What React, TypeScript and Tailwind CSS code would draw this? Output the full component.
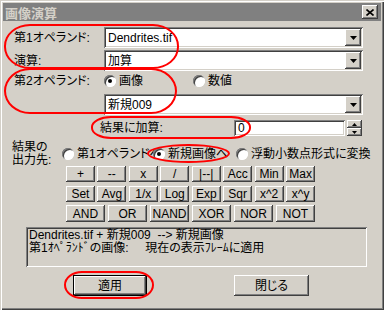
import React from "react";

const raised =
  "bg-[#d4d0c8] shadow-[inset_-1px_-1px_0_#404040,inset_1px_1px_0_#ffffff,inset_-2px_-2px_0_#808080]";
const sunken =
  "bg-white shadow-[inset_1px_1px_0_#808080,inset_-1px_-1px_0_#ffffff,inset_2px_2px_0_#404040,inset_-2px_-2px_0_#d4d0c8]";

const Arrow = () => (
  <svg width="7" height="4" viewBox="0 0 7 4">
    <path d="M0 0h7L3.5 4z" fill="#000" />
  </svg>
);

const Combo = ({ text }: { text: string }) => (
  <div className={`${sunken} w-[259px] h-[21px] flex items-center pl-[4px] pr-[2px]`}>
    <span className="text-[12px]">{text}</span>
    <div className={`${raised} ml-auto w-[16px] h-[17px] flex items-center justify-center`}>
      <Arrow />
    </div>
  </div>
);

const Radio = ({ checked, label, w }: { checked?: boolean; label: string; w?: string }) => (
  <div className={`flex items-center ${w ?? ""}`}>
    <div className="w-[12px] h-[12px] rounded-full bg-white shadow-[inset_1px_1px_0_#808080,inset_-1px_-1px_0_#ffffff,inset_2px_2px_0_#404040] flex items-center justify-center shrink-0">
      {checked && <div className="w-[4px] h-[4px] rounded-full bg-black" />}
    </div>
    <span className="ml-[3px] whitespace-nowrap">{label}</span>
  </div>
);

const Btn = ({ label }: { label: string }) => (
  <div className={`${raised} flex items-center justify-center text-[12px] h-full`}>{label}</div>
);

const row1 = ["+", "--", "x", "/", "|--|", "Acc", "Min", "Max"];
const row2 = ["Set", "Avg", "1/x", "Log", "Exp", "Sqr", "x^2", "x^y"];
const row3 = ["AND", "OR", "NAND", "XOR", "NOR", "NOT"];

export default function App() {
  return (
    <div className="w-[384px] h-[310px] relative overflow-hidden bg-[#d4d0c8] text-[12px] leading-none text-black font-['Liberation_Sans','Noto_Sans_CJK_JP',sans-serif] [font-feature-settings:'palt'] shadow-[inset_1px_1px_0_#d4d0c8,inset_2px_2px_0_#ffffff,inset_-1px_-1px_0_#404040,inset_-2px_-2px_0_#808080]">
      {/* title */}
      <div className="mx-[3px] mt-[3px] h-[18px] bg-[#808080] flex items-center pl-[2px] pr-[3px]">
        <span className="font-bold text-[13px] text-[#d4d0c8] font-['Noto_Sans_CJK_JP',sans-serif]">画像演算</span>
        <div className={`${raised} ml-auto w-[16px] h-[14px] flex items-center justify-center`}>
          <svg width="8" height="7" viewBox="0 0 8 7">
            <path d="M0.5 0.5l7 6M7.5 0.5l-7 6" stroke="#000" strokeWidth="1.6" />
          </svg>
        </div>
      </div>

      <div className="mt-[6px] h-[21px] flex items-center">
        <span className="ml-[14px] w-[90px]">第1オペランド:</span>
        <Combo text="Dendrites.tif" />
      </div>
      <div className="mt-[2px] h-[21px] flex items-center">
        <span className="ml-[14px] w-[90px]">演算:</span>
        <Combo text="加算" />
      </div>
      <div className="mt-[1px] h-[18px] flex items-center">
        <span className="ml-[14px] w-[90px]">第2オペランド:</span>
        <Radio checked label="画像" w="w-[89px]" />
        <Radio label="数値" />
      </div>
      <div className="mt-[4px] h-[21px] flex items-center pl-[104px]">
        <Combo text="新規009" />
      </div>
      <div className="mt-[5px] h-[16px] flex items-center">
        <span className="ml-[100px] w-[134px]">結果に加算:</span>
        <div className={`${sunken} w-[111px] h-[16px] flex items-center pl-[4px]`}>0</div>
        <div className="ml-[2px] w-[15px] h-[16px] flex flex-col">
          <div className={`${raised} h-[8px] flex items-center justify-center`}>
            <svg width="5" height="3" viewBox="0 0 5 3"><path d="M0 3h5L2.5 0z" fill="#000" /></svg>
          </div>
          <div className={`${raised} h-[8px] flex items-center justify-center`}>
            <svg width="5" height="3" viewBox="0 0 5 3"><path d="M0 0h5L2.5 3z" fill="#000" /></svg>
          </div>
        </div>
      </div>
      <div className="mt-[6px] h-[24px] flex items-center">
        <div className="ml-[12px] w-[50px] leading-[13px]">
          <div>結果の</div>
          <div>出力先:</div>
        </div>
        <Radio label="第1オペランドへ" w="w-[91px]" />
        <Radio checked label="新規画像へ" w="w-[83px]" />
        <Radio label="浮動小数点形式に変換" />
      </div>

      <div className="ml-[66px] w-[249px]">
        <div className="h-[16px] grid grid-cols-8 gap-x-[2.6px]">
          {row1.map((b) => <Btn key={b} label={b} />)}
        </div>
        <div className="mt-[4px] h-[16px] grid grid-cols-8 gap-x-[2.6px]">
          {row2.map((b) => <Btn key={b} label={b} />)}
        </div>
        <div className="mt-[3px] h-[17px] grid grid-cols-6 gap-x-[3px]">
          {row3.map((b) => <Btn key={b} label={b} />)}
        </div>
      </div>

      <div className="mt-[5px] ml-[26px] w-[341px] h-[40px] bg-[#d4d0c8] shadow-[inset_1px_1px_0_#808080,inset_-1px_-1px_0_#ffffff,inset_2px_2px_0_#404040,inset_-2px_-2px_0_#d4d0c8] pl-[3px] pt-[2px] leading-[13px] whitespace-pre">
        <div>Dendrites.tif + 新規009  --&gt; 新規画像</div>
        <div>第1ｵﾍﾟﾗﾝﾄﾞの画像:     現在の表示ﾌﾚｰﾑに適用</div>
      </div>

      <div className="mt-[8px] h-[21px] flex">
        <div className="ml-[73px] w-[74px] border border-black">
          <Btn label="適用" />
        </div>
        <div className="ml-[87px] w-[75px]">
          <Btn label="閉じる" />
        </div>
      </div>

      {/* annotation ellipses */}
      <div className="absolute left-[4px] top-[24px] w-[175px] h-[45px] rounded-[26px/22px] border-2 border-[#ff0000]" />
      <div className="absolute left-[4px] top-[68px] w-[173px] h-[46px] rounded-[26px/23px] border-2 border-[#ff0000]" />
      <div className="absolute left-[91px] top-[116px] w-[160px] h-[23px] rounded-[20px/11px] border-2 border-[#ff0000]" />
      <div className="absolute left-[147px] top-[144px] w-[83px] h-[19px] rounded-[50%] border-2 border-[#ff0000]" />
      <div className="absolute left-[64px] top-[271px] w-[90px] h-[28px] rounded-[18px/14px] border-2 border-[#ff0000]" />
    </div>
  );
}
